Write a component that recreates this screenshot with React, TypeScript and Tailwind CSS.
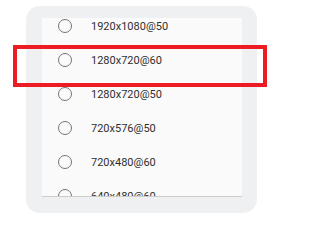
import React from "react";

const modes = [
  "1920x1080@50",
  "1280x720@60",
  "1280x720@50",
  "720x576@50",
  "720x480@60",
  "640x480@60",
];

function Radio() {
  return <span className="w-[14px] h-[14px] shrink-0 rounded-full border-[1.6px] border-[#747474]" />;
}

export default function App() {
  return (
    <div className="relative w-[281px] h-[215px] bg-white font-['Roboto',sans-serif]">
      {/* Card */}
      <div className="ml-[26px] pt-[12px] mt-[6px] w-[231px] h-[207px] rounded-[14px] bg-[#eff0f2] pl-4 pr-[15px]">
        <div className="h-[179px] overflow-hidden bg-[#fafafa] border-b border-[#cccccc]">
          <div className="-mt-[9px]">
            {modes.map((m) => (
              <div key={m} className="h-[34px] flex items-center pl-[16px] gap-[19px]">
                <Radio />
                <span className="text-[11px] text-[#303030] leading-none">{m}</span>
              </div>
            ))}
          </div>
        </div>
      </div>

      {/* Highlight */}
      <div className="absolute left-[13px] top-[39px] w-[254px] h-[42px] border-4 border-[#ed1c24]" />
    </div>
  );
}
